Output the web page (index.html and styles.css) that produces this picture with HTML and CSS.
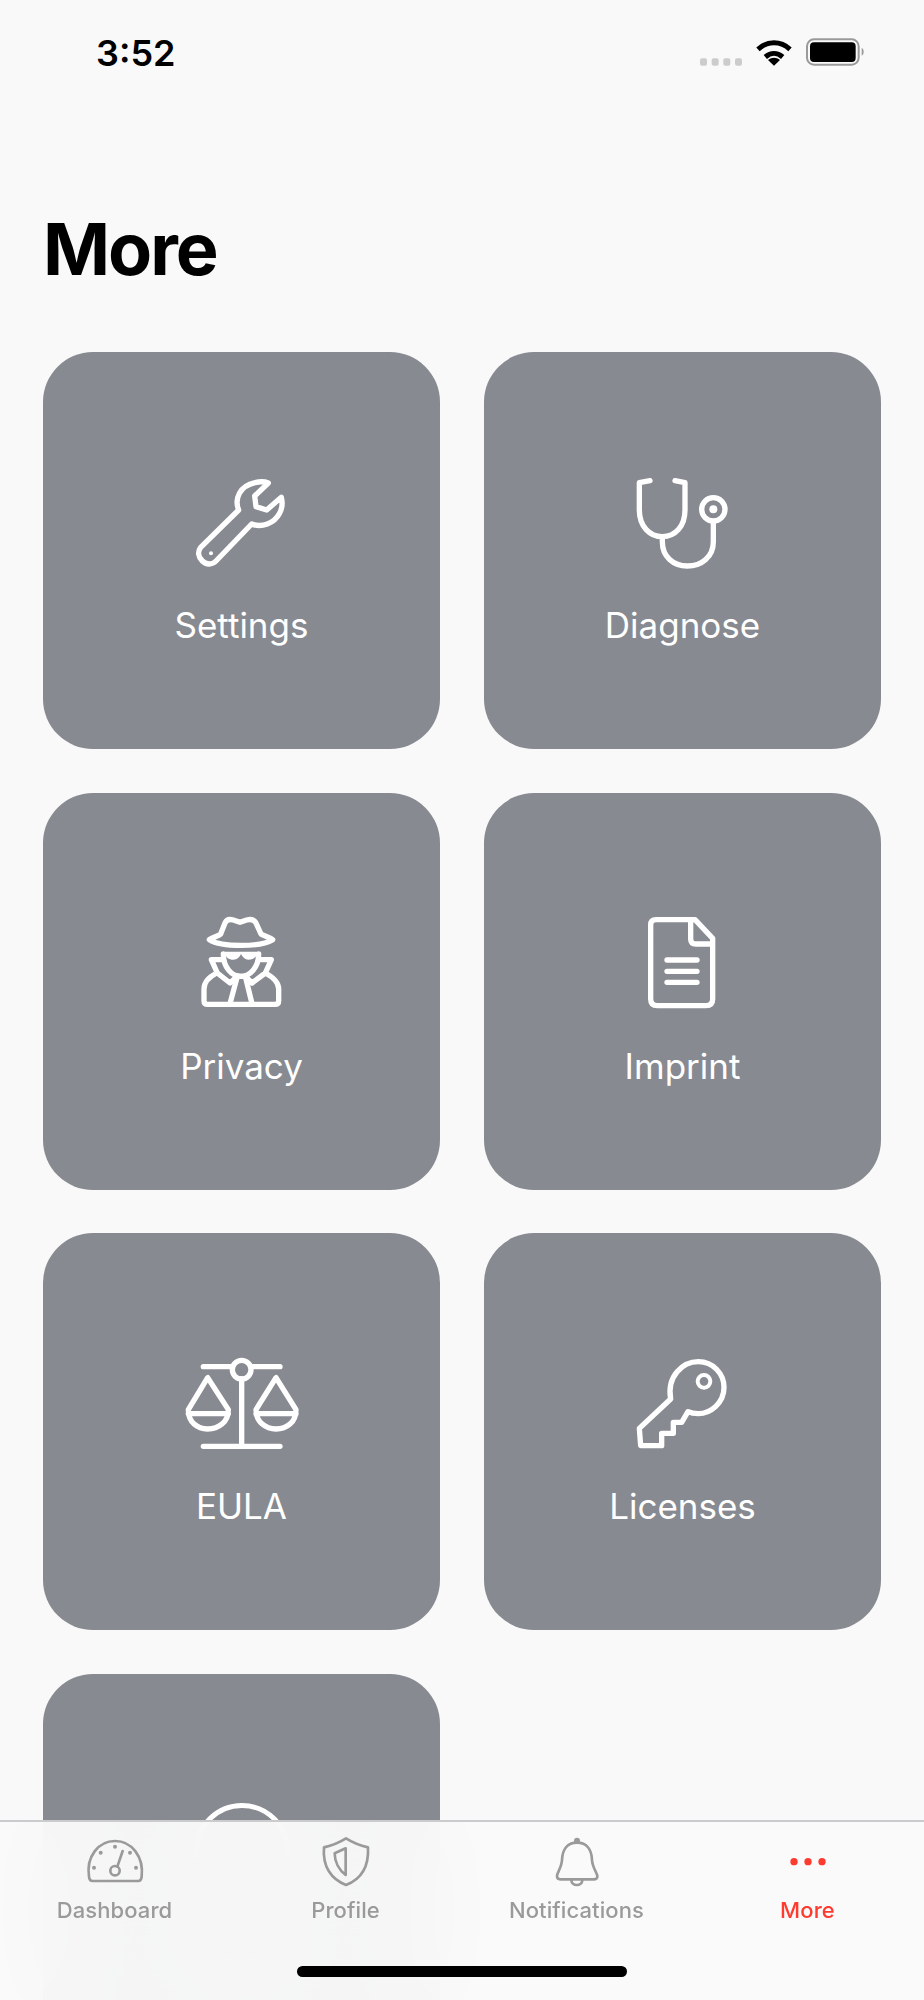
FILE: index.html
```html
<!DOCTYPE html>
<html lang="en">
<head>
<meta charset="utf-8">
<title>More</title>
<link rel="stylesheet" href="styles.css">
</head>
<body>
<div class="screen">
  <header class="status">
    <span class="time">3:52</span>
    <svg class="status-icons" viewBox="0 0 600 180">
      <g class="signal">
        <rect x="60" y="115" width="21" height="22" rx="6"/><rect x="95" y="115" width="21" height="22" rx="6"/><rect x="130" y="115" width="21" height="22" rx="6"/><rect x="165" y="115" width="21" height="22" rx="6"/>
      </g>
      <path class="wifi-arc" d="M234 88C262 62 302 62 330 88M256 111C272 97 292 97 308 111"/>
      <path d="M264 120C276 111 288 111 300 120L282 137Z"/>
      <rect class="batt-frame" x="381" y="58" width="155" height="76" rx="21"/>
      <rect x="390" y="67" width="137" height="59" rx="12"/>
      <path class="batt-cap" d="M545 84C553 87 553 104 545 107Z"/>
    </svg>
  </header>

  <h1 class="title">More</h1>

  <main class="grid">
    <a class="card">
      <svg class="card-icon" viewBox="66 9 360 360">
        <path d="M122 262L236 150C222 115 240 78 285 68C300 64 315 65 325 69L284 108L288 140L320 150L364 112C373 145 355 180 322 192C305 198 290 198 275 192L168 303C155 316 138 314 127 303C115 291 112 275 122 262Z"/>
        <circle class="solid" cx="153" cy="280" r="6"/>
      </svg>
      <span class="card-label">Settings</span>
    </a>
    <a class="card">
      <svg class="card-icon" viewBox="69 9 360 360">
        <path d="M150 62L118 68V150C118 200 150 230 187 230C225 230 255 200 255 150V68L225 62"/>
        <path d="M187 230V245C187 290 220 318 262 318C305 318 340 290 340 245V185"/>
        <circle cx="340" cy="148" r="35"/>
        <circle class="solid" cx="340" cy="148" r="12"/>
      </svg>
      <span class="card-label">Diagnose</span>
    </a>
    <a class="card">
      <svg class="card-icon" viewBox="6 15 360 360">
        <path d="M88 122C105 112 118 110 122 105L135 72C140 60 150 60 160 63L180 70L200 63C212 60 222 60 228 72L243 105C250 110 265 113 278 122C240 145 125 145 88 122Z"/>
        <path class="solid" d="M135 158H232C232 175 218 182 205 182C195 182 188 175 183 165C178 175 172 182 160 182C147 182 135 175 135 158Z"/>
        <path d="M130 165C130 205 155 232 182 232C210 232 236 205 236 165"/>
        <path d="M125 182H94L112 222L150 252L172 232M240 182H274L256 222L216 252L196 232"/>
        <path d="M110 222C85 235 72 250 72 270V305Q72 316 83 316H285Q296 316 296 305V270C296 250 280 235 256 222"/>
        <path d="M172 232H196L216 314M172 232L150 314"/>
      </svg>
      <span class="card-label">Privacy</span>
    </a>
    <a class="card">
      <svg class="card-icon" viewBox="9 15 360 360">
        <path d="M108 62H225L278 118V300Q278 320 258 320H112Q92 320 92 300V78Q92 62 108 62Z"/>
        <path d="M212 64V120Q212 135 228 135H276"/>
        <path d="M141 183H231M141 217H231M141 250H231"/>
      </svg>
      <span class="card-label">Imprint</span>
    </a>
    <a class="card">
      <svg class="card-icon" viewBox="36 15 360 360">
        <path d="M100 83H186M245 83H330M215 120V322M100 322H330"/>
        <circle cx="215" cy="92" r="28"/>
        <path d="M113 116L55 212C55 250 82 270 113 270C145 270 175 250 175 212ZM55 224H175"/>
        <path d="M318 116L258 212C258 250 288 270 318 270C350 270 378 250 378 212ZM258 224H378"/>
      </svg>
      <span class="card-label">EULA</span>
    </a>
    <a class="card">
      <svg class="card-icon" viewBox="9 15 360 360">
        <path d="M152 180C140 112 188 68 235 68C280 68 312 105 312 145C312 192 272 224 235 224C222 224 212 222 204 218L185 250H160V283H125V320H62L58 268Z"/>
        <circle class="thin" cx="252" cy="127" r="19"/>
      </svg>
      <span class="card-label">Licenses</span>
    </a>
    <a class="card">
      <svg class="card-icon" viewBox="0 0 120 120">
        <circle class="plain" cx="60" cy="66" r="45.5"/>
      </svg>
      <span class="card-label">About</span>
    </a>
  </main>

  <nav class="tabbar">
    <div class="tabs">
      <a class="tab">
        <svg class="tab-icon" viewBox="255 156 180 180">
          <path d="M278 303H414Q424 303 425 290C432 230 395 183 345 183C295 183 258 230 267 290Q268 303 278 303Z"/>
          <path d="M368 213L352 260"/>
          <circle cx="345" cy="272" r="14"/>
          <g class="solid">
            <circle cx="345" cy="200" r="6"/><circle cx="302" cy="218" r="6"/><circle cx="390" cy="218" r="6"/><circle cx="282" cy="263" r="6"/><circle cx="408" cy="263" r="6"/>
          </g>
        </svg>
        <span class="tab-label">Dashboard</span>
      </a>
      <a class="tab">
        <svg class="tab-icon" viewBox="946 156 180 180">
          <path d="M1036 175C1060 190 1080 197 1102 202C1105 260 1080 298 1036 315C992 298 965 260 970 202C992 197 1012 190 1036 175Z"/>
          <path d="M1035 205V285C1015 270 1002 245 1002 220Z"/>
        </svg>
        <span class="tab-label">Profile</span>
      </a>
      <a class="tab">
        <svg class="tab-icon" viewBox="252 156 180 180">
          <path d="M342 188C312 188 298 210 297 240C296 262 282 278 282 288Q282 298 292 298H392Q404 298 403 288C402 278 388 262 387 240C386 210 372 188 342 188Z"/>
          <circle class="solid" cx="342" cy="182" r="9"/>
          <path d="M325 300C325 320 358 320 358 300"/>
        </svg>
        <span class="tab-label">Notifications</span>
      </a>
      <a class="tab tab-active">
        <svg class="tab-icon" viewBox="946 156 180 180">
          <g class="solid">
            <circle cx="994" cy="245" r="11"/><circle cx="1036" cy="245" r="11"/><circle cx="1078" cy="245" r="11"/>
          </g>
        </svg>
        <span class="tab-label">More</span>
      </a>
    </div>
    <div class="home-indicator"></div>
  </nav>
</div>
</body>
</html>
```
FILE: styles.css
```css
* { box-sizing: border-box; }

html, body {
  margin: 0;
  background: #f9f9f9;
}

.screen {
  position: relative;
  width: 924px;
  height: 2000px;
  overflow: hidden;
  background: #f9f9f9;
  font-family: Inter, "Liberation Sans", sans-serif;
}

/* status bar */
.status {
  display: flex;
  justify-content: space-between;
  align-items: flex-start;
  height: 80px;
  padding: 20px 44px 0 96px;
}

.time {
  margin-top: 11px;
  font-size: 36px;
  line-height: 44px;
  font-weight: 600;
  color: #000;
}

.status-icons {
  width: 200px;
  height: 60px;
}

.signal { fill: #ccc; }
.wifi-arc { fill: none; stroke: #000; stroke-width: 15; }
.batt-frame { fill: none; stroke: #9a9a9a; stroke-width: 6; }
.batt-cap { fill: #9a9a9a; }

/* title */
.title {
  margin: 125px 0 0;
  padding: 0 43px;
  font-size: 72px;
  line-height: 88px;
  font-weight: 700;
  letter-spacing: -2px;
  color: #000;
}

/* grid */
.grid {
  display: grid;
  grid-template-columns: 397px 397px;
  grid-auto-rows: 397px;
  column-gap: 44px;
  row-gap: 43.7px;
  margin-top: 59px;
  padding: 0 43px;
}

.card {
  display: flex;
  flex-direction: column;
  align-items: center;
  padding-top: 111px;
  border-radius: 50px;
  background: #888a91;
  color: #fff;
}

.card-icon {
  width: 120px;
  height: 120px;
  overflow: visible;
  fill: none;
  stroke: #fff;
  stroke-width: 16;
  stroke-linecap: round;
  stroke-linejoin: round;
}

.card-icon .solid {
  fill: #fff;
  stroke: none;
}

.card-icon .thin { stroke-width: 12; }
.card-icon .plain { stroke-width: 5; }

.card-label {
  margin-top: 22px;
  font-size: 35px;
  line-height: 40px;
  font-weight: 400;
}

/* tab bar */
.tabbar {
  position: absolute;
  left: 0;
  right: 0;
  bottom: 0;
  height: 180px;
  border-top: 2px solid #cbcbcd;
  background: rgba(250, 250, 250, 0.96);
  backdrop-filter: blur(40px);
}

.tabs {
  display: grid;
  grid-template-columns: repeat(4, 231px);
  margin-left: -1px;
  padding-top: 10px;
}

.tab {
  display: flex;
  flex-direction: column;
  align-items: center;
  color: #9a9a9a;
}

.tab-icon {
  width: 60px;
  height: 60px;
  fill: none;
  stroke: currentColor;
  stroke-width: 8;
  stroke-linecap: round;
  stroke-linejoin: round;
}

.tab-icon .solid {
  fill: currentColor;
  stroke: none;
}

.tab-label {
  margin-top: 4px;
  font-size: 22px;
  line-height: 28px;
  font-weight: 500;
  letter-spacing: 0.1px;
}

.tab-active { color: #ff3b30; }

.home-indicator {
  width: 330px;
  height: 11px;
  margin: 42px auto 0;
  border-radius: 6px;
  background: #000;
}
```
